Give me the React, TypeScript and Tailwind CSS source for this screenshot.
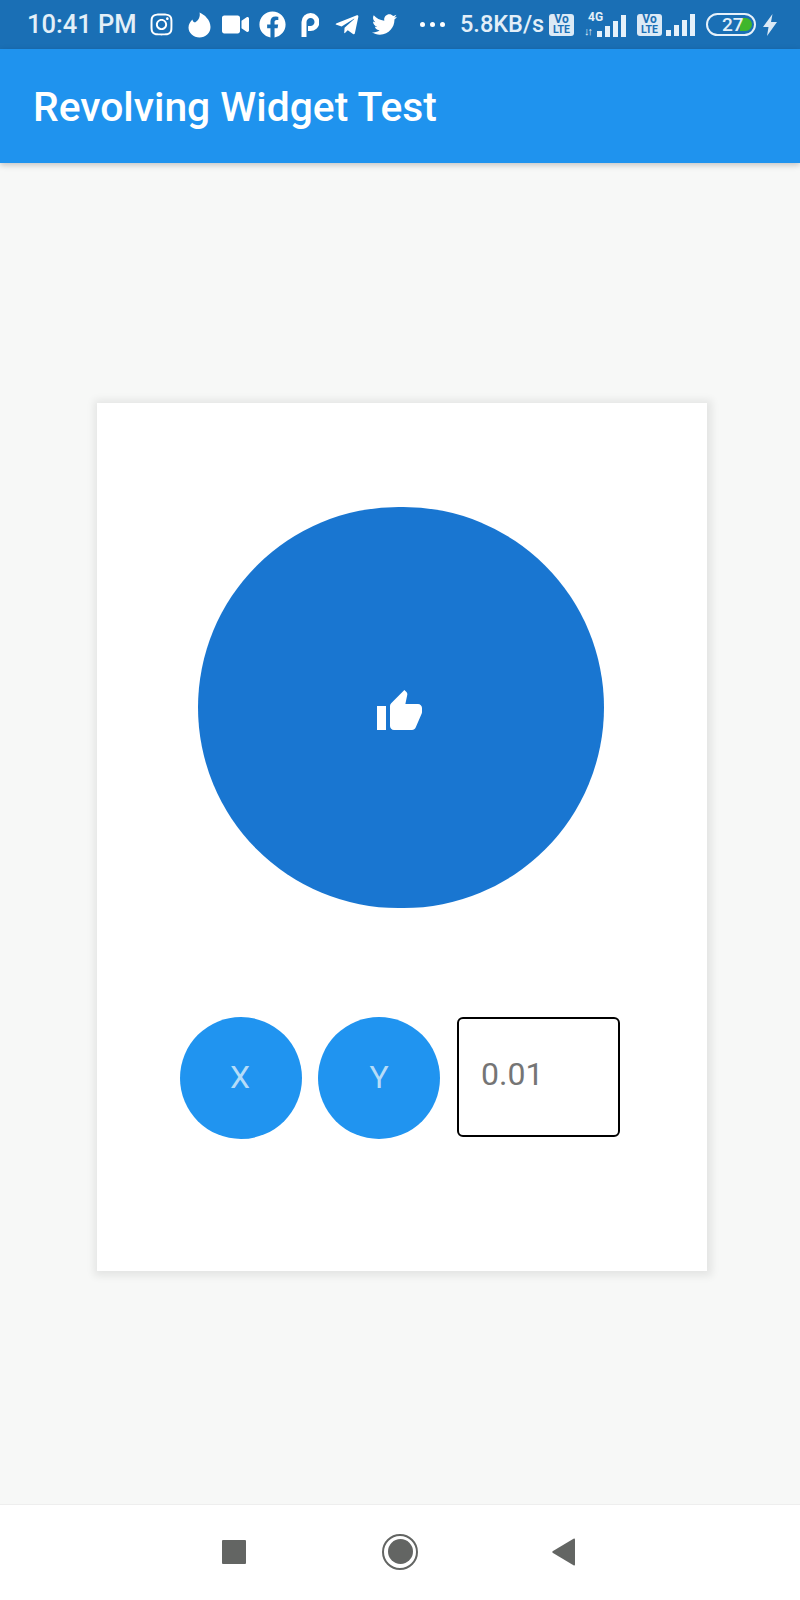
import React from "react";
import { FaInstagram, FaVideo, FaFacebook, FaTelegramPlane, FaTwitter } from "react-icons/fa";

const Bars = () => (
  <div className="flex items-end gap-[3px] h-[22px]">
    {[6, 11, 16, 22].map((h, i) => (
      <div key={i} className="w-[5px] bg-[#e6f1fa]" style={{ height: h }} />
    ))}
  </div>
);

const Vo = ({ ml }: { ml: string }) => (
  <div className={`${ml} w-[25px] h-[22px] rounded-[3px] bg-[#dceaf6] flex flex-col items-center justify-center text-[#1a6fb5] font-bold leading-[10px]`}>
    <span className="text-[12px] leading-[10px]">Vo</span>
    <span className="text-[10.5px] leading-[11px]">LTE</span>
  </div>
);

export default function App() {
  return (
    <div className="w-[800px] h-[1600px] flex flex-col bg-[#f7f8f7] overflow-hidden font-['Roboto',sans-serif]">
      <div className="h-[49px] shrink-0 bg-[#1a6fb5] flex items-center pl-[27px] text-[#e3eff8]">
        <span className="w-[109px] text-[25.5px] font-medium leading-none whitespace-nowrap">10:41 PM</span>
        <FaInstagram className="ml-[13px] text-[25px] text-white" />
        <svg className="ml-[14px]" width="23" height="26" viewBox="0 0 23 26" fill="#fff">
          <path d="M7 10.5C11 8 12.5 4 11.5 0.5c5 2 11 7.5 11 14.5 0 6-5 10.500-11 10.500S0.500 21 0.500 15.500C0.500 12 2.500 9.500 4.500 7.500c0 1.500 1 2.500 2.500 3z" />
        </svg>
        <FaVideo className="ml-[11px] text-[27px] text-white" />
        <FaFacebook className="ml-[10px] text-[27px] text-white" />
        <svg className="ml-[15px]" width="18" height="24" viewBox="0 0 18 24" fill="none" stroke="#fff" strokeWidth="5">
          <path d="M3 24V9a6.500 6.500 0 1 1 6 6.500H7" />
        </svg>
        <FaTelegramPlane className="ml-[15px] text-[26px] text-white" />
        <FaTwitter className="ml-[12px] text-[25px] text-white" />
        <div className="ml-[23px] flex gap-[5px]">
          <div className="w-[5px] h-[5px] rounded-full bg-white" />
          <div className="w-[5px] h-[5px] rounded-full bg-white" />
          <div className="w-[5px] h-[5px] rounded-full bg-white" />
        </div>
        <span className="ml-[15px] w-[84px] text-[23.5px] font-medium leading-none whitespace-nowrap">5.8KB/s</span>
        <Vo ml="ml-[5px]" />
        <div className="ml-[10px] relative w-[42px] h-[24px] flex items-end justify-end">
          <span className="absolute left-[4px] top-[-2px] text-[12px] font-bold leading-[12px]">4G</span>
          <span className="absolute left-[0px] bottom-[0px] text-[11px] font-bold leading-[11px] tracking-[-2px]">↓↑</span>
          <Bars />
        </div>
        <Vo ml="ml-[11px]" />
        <div className="ml-[4px]">
          <Bars />
        </div>
        <div className="ml-[11px] relative w-[50px] h-[23px] rounded-full border-2 border-[#e6f1fa] flex items-center pl-[14px] text-[19px] font-medium leading-none overflow-hidden">
          <span className="relative z-10">27</span>
          <div className="absolute left-[32px] top-[3px] w-[12px] h-[13px] rounded-r-full bg-[#3fb62c]" />
        </div>
        <svg className="ml-[7px]" width="14" height="22" viewBox="0 0 14 22" fill="#dceaf6">
          <path d="M9.500 0 0 13h5.500L4 22l10-14H8z" />
        </svg>
      </div>

      <div className="h-[114px] shrink-0 bg-[#1f93ee] flex items-center pl-[33px] pt-[2px] shadow-[0_2px_6px_rgba(0,0,0,0.22)] z-10">
        <h1 className="text-[40.8px] font-medium text-white leading-none whitespace-nowrap">Revolving Widget Test</h1>
      </div>

      <main className="flex-1 flex flex-col items-center pt-[240px] pl-[4px]">
        <div className="w-[610px] h-[868px] bg-white shadow-[1px_1px_8px_4px_rgba(0,0,0,0.08)] flex flex-col items-center pt-[104px]">
          <div className="mr-[2px] w-[406px] h-[401px] rounded-full bg-[#1976d1] flex items-center justify-center pt-[8px] pr-[2px]">
            <svg width="48" height="48" viewBox="0 0 24 24" fill="#fff">
              <path d="M0.500 21h4.500V9H0.500v12zm22.500-11c0-1.100-.9-2-2-2h-6.310l.95-4.570.03-.320c0-.410-.170-.790-.440-1.060L14.170 1 7.590 7.590C7.220 7.950 7 8.450 7 9v10c0 1.100.9 2 2 2h9c.830 0 1.540-.5 1.840-1.220l3.020-7.050c.090-.230.140-.470.140-.730v-2z" />
            </svg>
          </div>
          <div className="mt-[109px] mr-[4px] flex items-start">
            <div className="w-[122px] h-[122px] rounded-full bg-[#2094f0] flex items-center justify-center pb-[2px] pr-[2px] text-[#b5dcf8] text-[32px]">X</div>
            <div className="ml-[16px] w-[122px] h-[122px] rounded-full bg-[#2094f0] flex items-center justify-center pb-[2px] text-[#b5dcf8] text-[32px]">Y</div>
            <div className="ml-[17px] w-[163px] h-[120px] rounded-[6px] border-2 border-black flex items-center pl-[22px] pb-[6px] text-[#757575] text-[32px]">0.01</div>
          </div>
        </div>
      </main>

      <div className="h-[96px] shrink-0 bg-white border-t border-[#eeeeee] flex items-center pb-[2px]">
        <div className="ml-[222px] w-[24px] h-[24px] rounded-[1px] bg-[#636563]" />
        <div className="ml-[136px] w-[36px] h-[36px] rounded-full border-[2.5px] border-[#636563] flex items-center justify-center">
          <div className="w-[25px] h-[25px] rounded-full bg-[#636563]" />
        </div>
        <svg className="ml-[134px]" width="24" height="28" viewBox="0 0 24 28" fill="#636563">
          <path d="M23 1.500V26.500a1 1 0 0 1-1.500.8L1 15a1.200 1.200 0 0 1 0-2L21.500.7A1 1 0 0 1 23 1.500z" />
        </svg>
      </div>
    </div>
  );
}
